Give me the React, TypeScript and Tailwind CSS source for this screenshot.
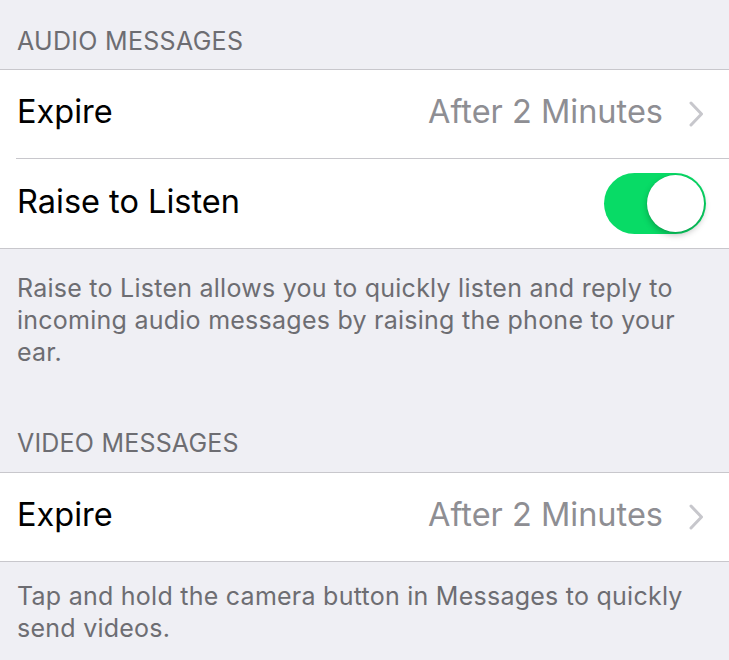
import React from "react";

function Chevron() {
  return (
    <svg width="15" height="26" viewBox="0 0 15 26" className="shrink-0">
      <path d="M2 2 L12.5 13 L2 24" fill="none" stroke="#c7c7cc" strokeWidth="3" strokeLinecap="round" strokeLinejoin="round" />
    </svg>
  );
}

function Toggle() {
  return (
    <div className="w-[102px] h-[61px] rounded-full bg-[#08db66] p-[2px] flex justify-end items-center shrink-0">
      <div className="w-[57px] h-[57px] rounded-full bg-white shadow-[0_3px_6px_rgba(0,0,0,0.25),0_0_0_0.5px_rgba(0,0,0,0.08)]" />
    </div>
  );
}

function ExpireRow() {
  return (
    <div className="h-[88px] pl-[17px] pr-[25px] flex items-center text-[32.5px]">
      <span className="text-black flex-1 pb-[3px]">Expire</span>
      <span className="text-[#8e8e93] mr-[26px] pb-[3px]">After 2 Minutes</span>
      <Chevron />
    </div>
  );
}

export default function App() {
  return (
    <div
      className="w-[729px] h-[660px] overflow-hidden bg-[#efeff4]"
      style={{ fontFamily: "Inter, 'Liberation Sans', Arial, sans-serif" }}
    >
      <div className="h-[69px] pb-[14px] px-[17px] flex items-end text-[25px] leading-[28px] tracking-[0.3px] text-[#6d6d72]">
        AUDIO MESSAGES
      </div>
      <div className="bg-white border-y border-[#c8c7cc]">
        <ExpireRow />
        <div className="ml-[16px] h-px bg-[#c8c7cc]" />
        <div className="h-[89px] pl-[17px] pr-[23px] flex items-center text-[32.5px]">
          <span className="text-black flex-1 pb-[2px]">Raise to Listen</span>
          <Toggle />
        </div>
      </div>
      <div className="pt-[23px] px-[17px] text-[25px] leading-[32px] tracking-[0.25px] text-[#6d6d72]">
        Raise to Listen allows you to quickly listen and reply to incoming audio messages by raising the phone to your ear.
      </div>
      <div className="h-[104px] pb-[15px] px-[17px] flex items-end text-[25px] leading-[28px] tracking-[0.2px] text-[#6d6d72]">
        VIDEO MESSAGES
      </div>
      <div className="bg-white border-y border-[#c8c7cc]">
        <ExpireRow />
      </div>
      <div className="pt-[18px] px-[17px] text-[25px] leading-[32px] tracking-[0.25px] text-[#6d6d72]">
        Tap and hold the camera button in Messages to quickly send videos.
      </div>
    </div>
  );
}
